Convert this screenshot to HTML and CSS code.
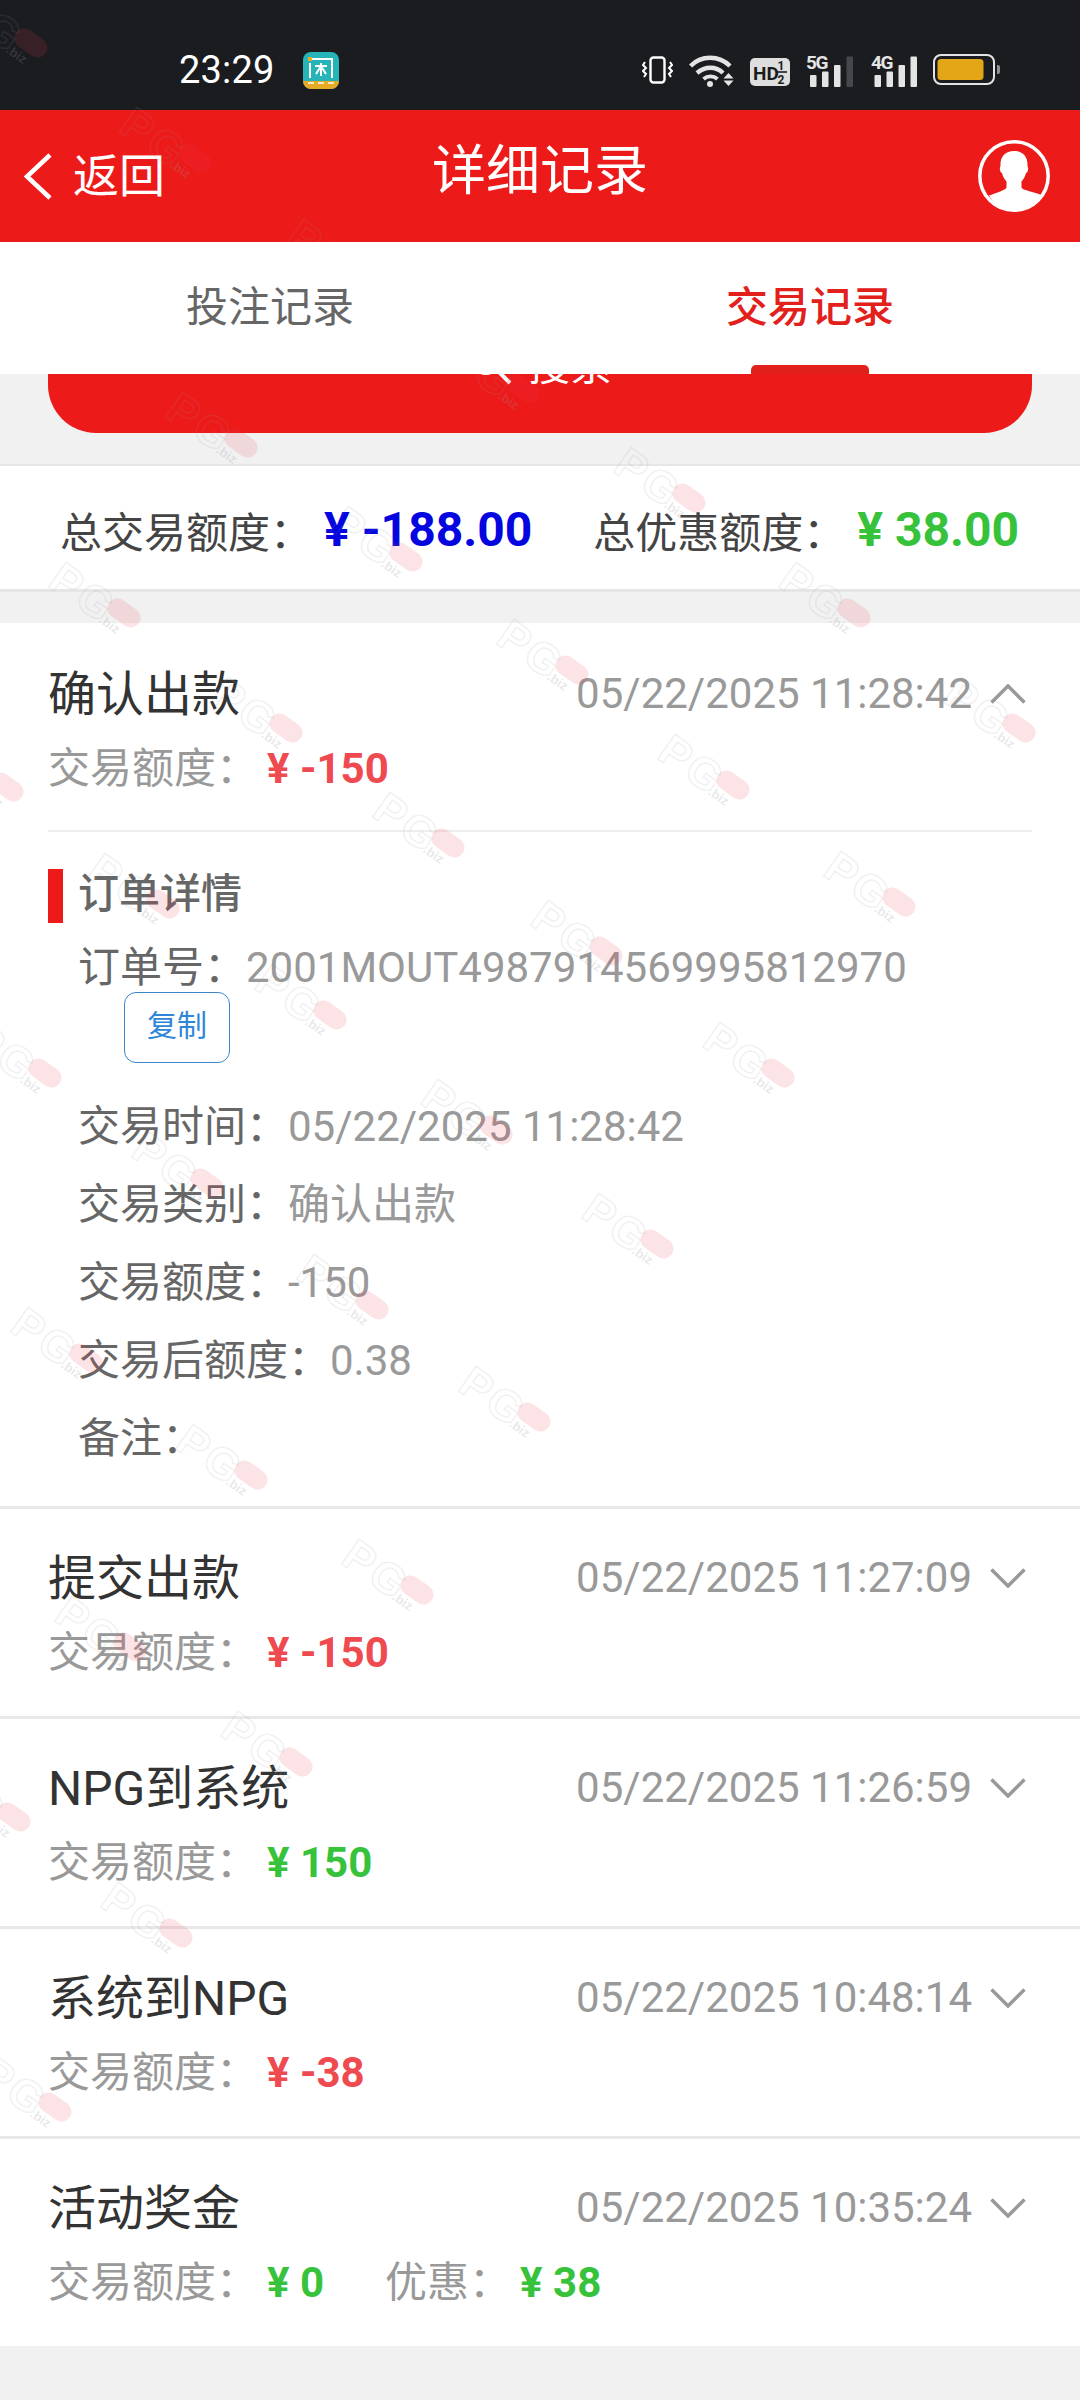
FILE: index.html
```html
<!DOCTYPE html>
<html lang="zh-CN">
<head>
<meta charset="utf-8">
<title>详细记录</title>
<link rel="stylesheet" href="styles.css">
</head>
<body>
<div class="page">
  <div class="statusbar">
    <span class="time">23:29</span>
    <svg class="app-icon" viewBox="0 0 36 37">
      <rect width="36" height="37" rx="8" fill="#26b4b8"/>
      <path d="M0 29h36v0a8 8 0 0 1-8 8H8a8 8 0 0 1-8-8z" fill="#e6ab24"/>
      <path d="M7 11v15M7 7h22v19M18 11v13M12 14h12M18 14l-5 8M18 14l5 8" fill="none" stroke="#fff" stroke-width="2"/>
      <rect x="5" y="5" width="4" height="4" fill="#e6ab24"/>
      <path d="M5 31h6M15 31h6M25 31h6" stroke="#fff" stroke-width="1.6"/>
    </svg>
    <div class="status-right">
      <svg class="ic-vib" viewBox="0 0 31 28">
        <rect x="8.5" y="1.5" width="14" height="25" rx="3" fill="none" stroke="#fff" stroke-width="2.4"/>
        <path d="M3 6l-2 3 3 3-3 3 3 3-2 3M28 6l2 3-3 3 3 3-3 3 2 3" fill="none" stroke="#fff" stroke-width="2"/>
      </svg>
      <svg class="ic-wifi" viewBox="0 0 45 34">
        <path d="M1.5 13C12 2 30 2 41 13" fill="none" stroke="#e4e4e4" stroke-width="4.4"/>
        <path d="M8 20c8-7 19-7 26 0" fill="none" stroke="#e4e4e4" stroke-width="4.4"/>
        <path d="M14.5 26c4-3.500 10-3.500 14 0" fill="none" stroke="#e4e4e4" stroke-width="3.800"/>
        <circle cx="21" cy="31" r="3" fill="#e4e4e4"/>
        <path d="M39.500 20l5 5.500h-10zM34.500 27.500h10l-5 5.500z" fill="#e4e4e4"/>
      </svg>
      <svg class="ic-hd" viewBox="0 0 40 28">
        <rect width="40" height="28" rx="5" fill="#dedede"/>
        <text class="hd-t" x="3" y="22">HD</text>
        <text class="hd-n" x="27.500" y="12">1</text>
        <text class="hd-n" x="27.500" y="26">2</text>
        <path d="M26 14h11" stroke="#1a1c20" stroke-width="1.6"/>
      </svg>
      <svg class="ic-sig" viewBox="0 0 49 33">
        <text class="sig-t" x="0" y="15">5G</text>
        <rect x="4" y="21" width="6.500" height="12" rx="1" fill="#e4e4e4"/>
        <rect x="16" y="17.500" width="6.500" height="15.500" rx="1" fill="#e4e4e4"/>
        <rect x="28" y="11" width="6.500" height="22" rx="1" fill="#e4e4e4"/>
        <rect x="40.500" y="2.500" width="6.500" height="30.500" rx="1" fill="#45474a"/>
      </svg>
      <svg class="ic-sig2" viewBox="0 0 46 33">
        <text class="sig-t" x="0" y="15">4G</text>
        <rect x="3.500" y="21" width="6.500" height="12" rx="1" fill="#e4e4e4"/>
        <rect x="15.500" y="17.500" width="6.500" height="15.500" rx="1" fill="#e4e4e4"/>
        <rect x="27.500" y="11" width="6.500" height="22" rx="1" fill="#e4e4e4"/>
        <rect x="39.500" y="2.500" width="6.500" height="30.500" rx="1" fill="#e4e4e4"/>
      </svg>
      <svg class="ic-bat" viewBox="0 0 67 31">
        <rect x="1" y="1" width="60" height="29" rx="7" fill="none" stroke="#e4e4e4" stroke-width="2"/>
        <rect x="4.500" y="5" width="46" height="21" rx="3.500" fill="#e2a617"/>
        <path d="M64 11h1a2 2 0 0 1 2 2v5a2 2 0 0 1-2 2h-1z" fill="#8f9092"/>
      </svg>
    </div>
  </div>

  <header class="navbar">
    <div class="nav-back">
      <svg class="chev-back" viewBox="0 0 30 47"><path d="M27 2L4 23.500 27 45" fill="none" stroke="#fff" stroke-width="4.500"/></svg>
      <span class="nav-back-label">返回</span>
    </div>
    <h1 class="nav-title">详细记录</h1>
    <svg class="avatar" viewBox="0 0 72 72">
      <circle cx="36" cy="36" r="34.200" fill="none" stroke="#fff" stroke-width="3.500"/>
      <path d="M36 11c-9 0-14 6-13.500 15 0 1-1 1-.5 4 .3 2 1.200 2.800 2 3 .8 3.500 2.500 6.500 4.500 8.500v6c0 2-9 5-17.500 8C16 65 26 70.500 36 70.500S56 65 65.500 55.500C57 52.500 44 50 43.500 47.500v-6c2-2 3.700-5 4.500-8.500.8-.2 1.700-1 2-3 .5-3-.5-3-.5-4C50 17 45 11 36 11z" fill="#fff"/>
    </svg>
  </header>

  <nav class="tabs">
    <div class="tab">投注记录</div>
    <div class="tab tab-active">交易记录</div>
  </nav>

  <div class="search-wrap">
    <button class="search-btn">
      <svg class="search-ic" viewBox="0 0 44 44"><circle cx="18" cy="18" r="14" fill="none" stroke="#fff" stroke-width="4"/><path d="M28 28l14 14" stroke="#fff" stroke-width="4"/></svg>
      <span>搜索</span>
    </button>
  </div>

  <section class="summary">
    <span class="sum-label">总交易额度：</span><span class="sum-val blue">¥ -188.00</span>
    <span class="sum-label sum-second">总优惠额度：</span><span class="sum-val green">¥ 38.00</span>
  </section>

  <section class="list">
    <article class="card">
      <div class="card-head">
        <span class="card-title">确认出款</span>
        <div class="card-right">
          <span class="card-date">05/22/2025 11:28:42</span>
          <svg class="chev" viewBox="0 0 36 20"><path d="M1.500 18.500L18 2l16.500 16.500" /></svg>
        </div>
      </div>
      <div class="card-sub">
        <span class="sub-label">交易额度：</span><span class="amt red">¥ -150</span>
      </div>
      <div class="detail">
        <h2 class="detail-title">订单详情</h2>
        <div class="order-row"><span class="d-label">订单号：</span><span class="d-val">2001MOUT4987914569995812970</span></div>
        <button class="copy">复制</button>
        <div class="info-rows">
          <div class="info-row"><span class="d-label">交易时间：</span><span class="d-val">05/22/2025 11:28:42</span></div>
          <div class="info-row"><span class="d-label">交易类别：</span><span class="d-val">确认出款</span></div>
          <div class="info-row"><span class="d-label">交易额度：</span><span class="d-val">-150</span></div>
          <div class="info-row"><span class="d-label">交易后额度：</span><span class="d-val">0.38</span></div>
          <div class="info-row"><span class="d-label">备注：</span></div>
        </div>
      </div>
    </article>

    <article class="card">
      <div class="card-head">
        <span class="card-title">提交出款</span>
        <div class="card-right">
          <span class="card-date">05/22/2025 11:27:09</span>
          <svg class="chev" viewBox="0 0 36 20"><path d="M1.500 1.500L18 18 34.500 1.500" /></svg>
        </div>
      </div>
      <div class="card-sub"><span class="sub-label">交易额度：</span><span class="amt red">¥ -150</span></div>
    </article>

    <article class="card">
      <div class="card-head">
        <span class="card-title">NPG到系统</span>
        <div class="card-right">
          <span class="card-date">05/22/2025 11:26:59</span>
          <svg class="chev" viewBox="0 0 36 20"><path d="M1.500 1.500L18 18 34.500 1.500" /></svg>
        </div>
      </div>
      <div class="card-sub"><span class="sub-label">交易额度：</span><span class="amt green">¥ 150</span></div>
    </article>

    <article class="card">
      <div class="card-head">
        <span class="card-title">系统到NPG</span>
        <div class="card-right">
          <span class="card-date">05/22/2025 10:48:14</span>
          <svg class="chev" viewBox="0 0 36 20"><path d="M1.500 1.500L18 18 34.500 1.500" /></svg>
        </div>
      </div>
      <div class="card-sub"><span class="sub-label">交易额度：</span><span class="amt red">¥ -38</span></div>
    </article>

    <article class="card card-last">
      <div class="card-head">
        <span class="card-title">活动奖金</span>
        <div class="card-right">
          <span class="card-date">05/22/2025 10:35:24</span>
          <svg class="chev" viewBox="0 0 36 20"><path d="M1.500 1.500L18 18 34.500 1.500" /></svg>
        </div>
      </div>
      <div class="card-sub">
        <span class="sub-label">交易额度：</span><span class="amt green">¥ 0</span>
        <span class="sub-label sub-second">优惠：</span><span class="amt green">¥ 38</span>
      </div>
    </article>
  </section>

  <svg class="watermarks" viewBox="0 0 1080 2400" aria-hidden="true">
    <defs>
      <g id="wm" transform="rotate(35)">
        <rect class="wm-pill" x="-18" y="-10" width="36" height="20" rx="10"/>
        <text class="wm-pg" x="-10" y="22" text-anchor="end">PG</text>
        <text class="wm-biz" x="-16" y="22">.biz</text>
      </g>
    </defs>
    <use href="#wm" x="31" y="43"/><use href="#wm" x="195" y="158"/><use href="#wm" x="362" y="270"/><use href="#wm" x="523" y="389"/><use href="#wm" x="689" y="498"/><use href="#wm" x="854" y="613"/><use href="#wm" x="1019" y="728"/>
    <use href="#wm" x="79" y="328"/><use href="#wm" x="241" y="443"/><use href="#wm" x="406" y="557"/><use href="#wm" x="572" y="670"/><use href="#wm" x="733" y="785"/><use href="#wm" x="899" y="902"/>
    <use href="#wm" x="124" y="613"/><use href="#wm" x="286" y="728"/><use href="#wm" x="448" y="843"/><use href="#wm" x="606" y="951"/><use href="#wm" x="778" y="1073"/>
    <use href="#wm" x="7" y="787"/><use href="#wm" x="163" y="904"/><use href="#wm" x="330" y="1015"/><use href="#wm" x="496" y="1130"/><use href="#wm" x="657" y="1244"/>
    <use href="#wm" x="45" y="1073"/><use href="#wm" x="207" y="1183"/><use href="#wm" x="372" y="1305"/><use href="#wm" x="534" y="1417"/>
    <use href="#wm" x="86" y="1358"/><use href="#wm" x="251" y="1475"/><use href="#wm" x="417" y="1590"/>
    <use href="#wm" x="130" y="1647"/><use href="#wm" x="296" y="1762"/>
    <use href="#wm" x="14" y="1817"/><use href="#wm" x="176" y="1933"/>
    <use href="#wm" x="55" y="2107"/>
  </svg>
</div>
</body>
</html>
```

FILE: styles.css
```css
* { box-sizing: border-box; }
html, body { margin: 0; padding: 0; }
body {
  background: #f1f1f1;
  font-family: Roboto, "Noto Sans CJK SC", sans-serif;
  color: #333;
}
.page { position: relative; width: 1080px; height: 2400px; overflow: hidden; }

.statusbar {
  height: 110px;
  background: #1a1c20;
  display: flex;
  align-items: center;
  padding: 28px 80px 0 179px;
  color: #fff;
}
.time { font-size: 38px; line-height: 44px; letter-spacing: .2px; margin-top: 1px; }
.app-icon { width: 36px; height: 37px; margin-left: 28px; margin-top: 3px; }
.status-right { margin-left: auto; display: flex; align-items: center; gap: 16px; margin-top: 1px; }
.status-right svg { display: block; }
.ic-vib { width: 31px; height: 28px; }
.ic-wifi { width: 45px; height: 34px; }
.ic-hd { width: 40px; height: 28px; margin-top: 4px; }
.ic-sig { width: 49px; height: 33px; margin-top: 2px; }
.ic-sig2 { width: 46px; height: 33px; margin-top: 2px; }
.ic-bat { width: 67px; height: 31px; }
.hd-t { font: 700 19px "Liberation Sans Narrow", Roboto, sans-serif; fill: #1a1c20; }
.hd-n { font: 700 12px Roboto, sans-serif; fill: #1a1c20; }
.sig-t { font: 700 19px Roboto, sans-serif; fill: #e4e4e4; letter-spacing: -1.5px; }

.navbar {
  position: relative;
  height: 132px;
  background: #ed1a1a;
  color: #fff;
  display: flex;
  align-items: center;
  justify-content: space-between;
  padding: 0 30px 0 23px;
}
.nav-back { display: flex; align-items: center; gap: 20px; font-size: 46px; }
.nav-back-label { margin-bottom: 8px; }
.chev-back { width: 30px; height: 47px; }
.nav-title {
  position: absolute;
  left: 0;
  right: 0;
  top: 0;
  margin: 0;
  text-align: center;
  font-size: 54px;
  font-weight: 400;
  line-height: 124px;
}
.avatar { width: 72px; height: 72px; }

.tabs {
  position: relative;
  z-index: 2;
  height: 132px;
  background: #fff;
  display: flex;
}
.tab {
  flex: 1;
  position: relative;
  text-align: center;
  font-size: 42px;
  line-height: 132px;
  color: #666;
}
.tab-active { color: #e2201c; font-weight: 500; }
.tab-active::after {
  content: "";
  position: absolute;
  left: 211px;
  bottom: 0;
  width: 118px;
  height: 9px;
  background: #e2201c;
  border-radius: 5px 5px 0 0;
}

.search-wrap { padding: 0 48px; height: 90px; }
.search-btn {
  width: 100%;
  height: 59px;
  padding: 0;
  border: 0;
  background: #ed1a1a;
  color: #fff;
  border-radius: 0 0 48px 48px;
  display: flex;
  justify-content: center;
  align-items: flex-start;
  gap: 16px;
  overflow: hidden;
  font: 42px Roboto, "Noto Sans CJK SC", sans-serif;
  line-height: 60px;
}
.search-btn span { margin-top: -38px; }
.search-ic { width: 44px; height: 44px; margin-top: -33px; flex: none; }

.summary {
  height: 128px;
  background: #fff;
  border-top: 2px solid #e6e6e6;
  border-bottom: 3px solid #e6e6e6;
  padding: 3px 0 0 60px;
  display: flex;
  align-items: center;
  font-size: 42px;
}
.sum-label { color: #444; }
.sum-val { font-size: 48px; font-weight: 700; margin-left: 12px; white-space: pre; }
.sum-second { margin-left: 61px; }
.blue { color: #0505e0; }
.green { color: #37c23c; }
.red { color: #ee4a50; }

.list { margin-top: 31px; }
.card {
  background: #fff;
  border-bottom: 3px solid #e8e8e8;
}
.card-last { border-bottom: 0; }
.card-head {
  padding: 39px 54px 0 48px;
  height: 105px;
  display: flex;
  justify-content: space-between;
  align-items: center;
}
.card-title { font-size: 48px; line-height: 66px; color: #333; }
.card-right { display: flex; align-items: center; gap: 18px; }
.card-date { font-size: 42px; line-height: 66px; color: #999; margin-top: -3px; }
.chev { width: 36px; height: 20px; margin-top: -3px; }
.chev path { fill: none; stroke: #999; stroke-width: 3.5; }
.card-sub {
  margin-top: 11px;
  padding: 0 48px 31px;
  font-size: 42px;
  line-height: 60px;
  display: flex;
  align-items: center;
}
.card + .card .card-head { padding-top: 37px; height: 103px; }
.card + .card .card-sub { padding-bottom: 33px; }
.sub-label { color: #999; }
.amt { font-weight: 700; font-size: 42px; margin-left: 9px; white-space: pre; }
.sub-second { margin-left: 61px; }

.detail {
  margin: 0 48px;
  padding-top: 37px;
  padding-bottom: 28px;
  border-top: 2px solid #eee;
}
.detail-title {
  margin: 0;
  height: 54px;
  line-height: 50px;
  border-left: 15px solid #ed1a1a;
  padding-left: 15px;
  font-size: 41px;
  font-weight: 500;
  color: #666;
}
.order-row { margin-top: 18px; padding-left: 30px; line-height: 54px; font-size: 42px; }
.d-label { color: #666; }
.d-val { color: #999; }
.copy {
  display: block;
  margin: -3px 0 0 76px;
  width: 106px;
  height: 71px;
  padding: 0 0 9px;
  background: #fff;
  border: 1.500px solid #3b87c9;
  border-radius: 12px;
  color: #2f86d8;
  font: 30px "Noto Sans CJK SC", sans-serif;
}
.info-rows { margin-top: 25px; padding-left: 30px; }
.info-row { height: 78px; line-height: 78px; font-size: 42px; }

.watermarks {
  position: absolute;
  top: 0;
  left: 0;
  width: 1080px;
  height: 2400px;
  pointer-events: none;
}
.wm-pill { fill: rgba(232, 60, 75, .14); }
.wm-pg {
  font: 700 44px "Liberation Sans", sans-serif;
  letter-spacing: 3px;
  fill: none;
  stroke: rgba(150, 150, 150, .15);
  stroke-width: 1.500;
}
.wm-biz { font: 700 13px "Liberation Sans", sans-serif; fill: rgba(150, 150, 150, .22); }
```
